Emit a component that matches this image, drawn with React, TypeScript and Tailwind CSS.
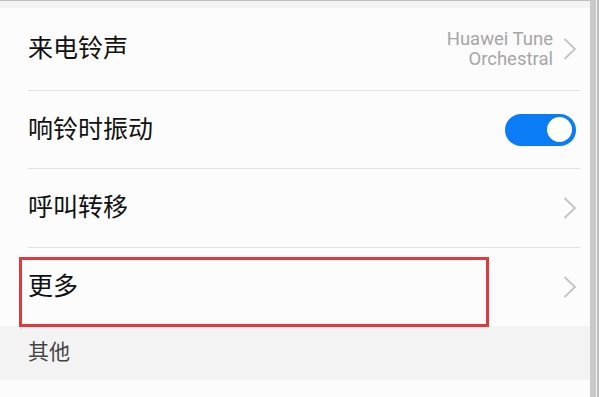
import React from "react";

function Chevron() {
  return (
    <svg width="14" height="24" viewBox="0 0 14 24" className="shrink-0">
      <path d="M1.5 2 L12 12 L1.5 22" fill="none" stroke="#c4c4c4" strokeWidth="1.8" />
    </svg>
  );
}

function Row(props: { label: string; children?: React.ReactNode; divider?: boolean; h: string }) {
  const { label, children, divider = true, h } = props;
  return (
    <div className={`flex flex-col ${h}`}>
      <div className="flex flex-1 items-center justify-between pl-[28px] pr-[13px]">
        <span className="text-[25px] text-[#111111]">{label}</span>
        {children}
      </div>
      {divider && <div className="ml-[28px] mr-[10px] h-px bg-[#e2e2e2]" />}
    </div>
  );
}

export default function App() {
  return (
    <div
      className="flex h-[397px] w-[599px] overflow-hidden bg-[#fcfcfc]"
      style={{ fontFamily: 'Roboto, "Noto Sans CJK SC", sans-serif' }}
    >
      <div className="flex w-[590px] flex-col">
        <div className="h-[8px] border-t border-[#c0c0c0] bg-[#f3f3f3]" />
        <Row label="来电铃声" h="h-[83px]">
          <div className="flex items-center gap-[10px]">
            <div className="text-right text-[18.5px] leading-[20px] text-[#a6a6a6]">
              <div>Huawei Tune</div>
              <div>Orchestral</div>
            </div>
            <Chevron />
          </div>
        </Row>
        <Row label="响铃时振动" h="h-[78px]">
          <div className="mr-[1px] flex h-[32px] w-[71px] items-center justify-end rounded-full bg-[#0a7cf5] px-[4px]">
            <div className="h-[25px] w-[25px] rounded-full bg-white" />
          </div>
        </Row>
        <Row label="呼叫转移" h="h-[79px]">
          <Chevron />
        </Row>
        <div className="relative">
          <Row label="更多" h="h-[78px]" divider={false}>
            <Chevron />
          </Row>
          <div className="pointer-events-none absolute left-[19px] top-[9px] h-[70px] w-[470px] border-[3px] border-[#e0393e]" />
        </div>
        <div className="flex h-[54px] items-center bg-[#f3f3f3] pl-[28px] text-[21px] text-[#444444]">其他</div>
        <div className="flex-1 bg-[#fcfcfc]" />
      </div>
      <div className="flex flex-1">
        <div className="w-[6px] bg-[#c9c9c9]" />
        <div className="w-px bg-[#f5f5f5]" />
        <div className="flex-1 bg-[#bdbdbd]" />
      </div>
    </div>
  );
}
